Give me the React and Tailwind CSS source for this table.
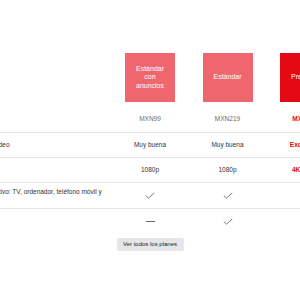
import React from "react";

function Check() {
  return (
    <svg width="10" height="7" viewBox="0 0 10 7" fill="none">
      <path d="M0.8 3.6 L3.6 6.2 L9.2 0.8" stroke="#6b6b6b" strokeWidth="0.9" />
    </svg>
  );
}

function Dash() {
  return <div className="w-[9px] h-[1px] bg-[#6b6b6b]" />;
}

const cell = "flex items-center justify-center text-center";

export default function App() {
  return (
    <div
      className="w-[300px] h-[300px] overflow-hidden bg-white"
      style={{ fontFamily: '"Liberation Sans", Arial, sans-serif' }}
    >
      <div className="pt-[53px] -ml-[62px] w-[406px]">
        <div className="grid grid-cols-[173px_78px_77px_78px]">
          {/* header boxes */}
          <div />
          <div className="flex justify-center">
            <div className="w-[50px] h-[49px] bg-[#f0666f] flex items-center justify-center text-center px-[5px] text-white text-[7px] leading-[8.5px]">
              Estándar con anuncios
            </div>
          </div>
          <div className="flex justify-center">
            <div className="w-[50px] h-[49px] bg-[#f0666f] flex items-center justify-center text-center px-[5px] text-white text-[7px] leading-[8.5px]">
              Estándar
            </div>
          </div>
          <div className="flex justify-center">
            <div className="w-[50px] h-[49px] bg-[#e50914] flex items-center justify-center text-center px-[5px] text-white text-[7px] leading-[8.5px]">
              Premium
            </div>
          </div>

          {/* prices */}
          <div className="h-[30px]" />
          <div className={`${cell} h-[30px] pt-[4px] text-[6.5px] text-[#6b6b6b]`}>MXN99</div>
          <div className={`${cell} h-[30px] pt-[4px] text-[6.5px] text-[#6b6b6b]`}>MXN219</div>
          <div className={`${cell} h-[30px] pt-[4px] text-[6.5px] text-[#e50914] font-bold`}>MXN299</div>
        </div>

        <div className="grid grid-cols-[173px_78px_77px_78px] border-t border-[#e5e5e5] h-[25px] text-[6.5px] text-[#333]">
          <div className="flex items-center pr-[3px]">Calidad de audio y vídeo</div>
          <div className={cell}>Muy buena</div>
          <div className={cell}>Muy buena</div>
          <div className={`${cell} text-[#e50914] font-bold`}>Excelente</div>
        </div>
        <div className="grid grid-cols-[173px_78px_77px_78px] border-t border-[#e5e5e5] h-[25px] text-[6.5px] text-[#333]">
          <div className="flex items-center pr-[3px]">Resolución</div>
          <div className={cell}>1080p</div>
          <div className={cell}>1080p</div>
          <div className={`${cell} text-[#e50914] font-bold`}>4K+HDR</div>
        </div>
        <div className="grid grid-cols-[173px_78px_77px_78px] border-t border-[#e5e5e5] h-[26px] text-[6.5px] text-[#333]">
          <div className="flex items-center pr-[3px] leading-[8px]">
            Disfruta en tu dispositivo: TV, ordenador, teléfono móvil y tablet
          </div>
          <div className={cell}><Check /></div>
          <div className={cell}><Check /></div>
          <div className={cell}><Check /></div>
        </div>
        <div className="grid grid-cols-[173px_78px_77px_78px] border-t border-[#e5e5e5] h-[25px] text-[6.5px] text-[#333]">
          <div className="flex items-center pr-[3px]">Descargas</div>
          <div className={cell}><Dash /></div>
          <div className={cell}><Check /></div>
          <div className={cell}><Check /></div>
        </div>

        <div className="grid grid-cols-[173px_78px_77px_78px] pt-[5px]">
          <div />
          <div className="flex justify-center">
            <button className="w-[67px] h-[13px] bg-[#e6e6e6] rounded-[2px] text-[6px] text-[#222] flex items-center justify-center whitespace-nowrap">
              Ver todos los planes
            </button>
          </div>
        </div>
      </div>
    </div>
  );
}
